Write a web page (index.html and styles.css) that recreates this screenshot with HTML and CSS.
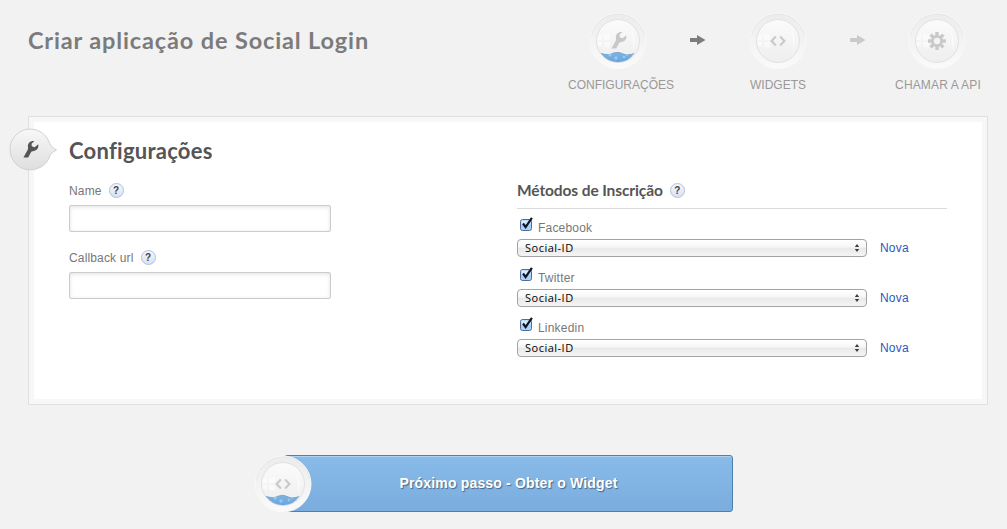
FILE: index.html
```html
<!DOCTYPE html>
<html lang="pt">
<head>
<meta charset="utf-8">
<title>Criar aplicação de Social Login</title>
<link rel="stylesheet" href="styles.css">
</head>
<body>
<svg class="defs" width="0" height="0" aria-hidden="true">
  <defs>
    <linearGradient id="ring" x1="0" y1="0" x2="0" y2="1"><stop offset="0" stop-color="#ececec"/><stop offset="1" stop-color="#fafafa"/></linearGradient>
    <linearGradient id="glass" x1="0" y1="0" x2="0" y2="1"><stop offset="0" stop-color="#fbfbfb"/><stop offset="1" stop-color="#eeeeee"/></linearGradient>
    <linearGradient id="water" x1="0" y1="0" x2="0" y2="1"><stop offset="0" stop-color="#7db5df"/><stop offset="1" stop-color="#68a4e2"/></linearGradient>
    <linearGradient id="pin" x1="0" y1="0" x2="0" y2="1"><stop offset="0" stop-color="#f8f8f8"/><stop offset="1" stop-color="#dedede"/></linearGradient>
    <symbol id="orb" viewBox="0 0 58 58">
      <circle cx="29" cy="29" r="28" fill="url(#ring)" stroke="#f8f8f8"/>
      <path d="M2.500 24a27 27 0 0 1 53 0" fill="none" stroke="#e3e3e3" opacity=".6"/>
      <circle cx="29" cy="29" r="21.500" fill="url(#glass)" stroke="#e2e2e2"/>
      <path d="M9 24l4-1v5H8zM15 23l6-1v6h-6zM8 30h5v5l-4-1zM15 30h6v6l-6-1z" fill="#fff" opacity=".5"/>
      <path d="M42 18q6 10 2 20q1-11-2-20z" fill="#fff" opacity=".7"/>
    </symbol>
    <symbol id="waves" viewBox="0 0 58 58">
      <path d="M12 41.500q4 1 7 1.200q3-.2 5-1.500q5-1.800 9 .2q3 1.800 6 1.400q3 0 6-1.300Q40 50 29 50.200Q18 50 12 41.500z" fill="url(#water)"/>
      <path d="M12 41.500q4 1 7 1.200q3-.2 5-1.500q5-1.800 9 .2q3 1.800 6 1.400q3 0 6-1.300" fill="none" stroke="#6ba0ca" stroke-width=".8"/>
      <g fill="#b5dbf5" opacity=".6"><circle cx="21" cy="43" r="1.500"/><circle cx="27" cy="46" r="1.700"/><circle cx="35" cy="45" r="1.300"/><circle cx="38" cy="43" r="1"/></g>
    </symbol>
    <symbol id="wrench" viewBox="0 0 18 20">
      <path d="M12.600 1C8.300.5 5 3.300 5.800 7.600Q6.300 9.700 5.100 11L1 18.600H6L9.300 12.500Q10.500 11.600 12.300 11.500C15.500 10.900 17.300 8.200 16.700 4.500L12.900 7.700L9.800 6.600L9.600 4z"/>
    </symbol>
    <symbol id="code" viewBox="0 0 18 12">
      <path d="M6.700 1.200L2 6L6.700 10.800M11.300 1.200L16 6L11.300 10.800" fill="none" stroke="currentColor" stroke-width="2.300"/>
    </symbol>
    <symbol id="gear" viewBox="-10 -10 20 20">
      <g fill="currentColor">
        <rect x="-1.700" y="-9" width="3.400" height="18"/>
        <rect x="-9" y="-1.700" width="18" height="3.400"/>
        <rect x="-1.700" y="-9" width="3.400" height="18" transform="rotate(45)"/>
        <rect x="-1.700" y="-9" width="3.400" height="18" transform="rotate(-45)"/>
        <circle r="6"/>
      </g>
      <circle r="3.200" fill="#f4f4f4"/>
    </symbol>
    <symbol id="arrow" viewBox="0 0 16 10"><path d="M0 3h7V0l8.500 5L7 10V7H0z" fill="currentColor"/></symbol>
    <symbol id="tick" viewBox="0 0 15 16">
      <rect x="1.500" y="3.500" width="11" height="11" rx="2" fill="#a9d2f4" stroke="#53699b"/>
      <path d="M2.500 4.500h9v4h-9z" fill="#d8ebfa"/>
      <path d="M4 7.500L6.600 11L12.900 1.800" fill="none" stroke="#10162c" stroke-width="2.200"/>
    </symbol>
    <symbol id="updown" viewBox="0 0 6 8"><path d="M.8 3L3 0l2.200 3zM.8 5h4.400L3 8z" fill="#3c3c3c"/></symbol>
  </defs>
</svg>

<header class="header">
  <h1 class="title">Criar aplicação de Social Login</h1>
  <nav class="steps">
    <div class="step">
      <svg class="orb" viewBox="0 0 58 58"><use href="#orb"/><use href="#waves"/><use href="#wrench" x="21.500" y="19" width="17" height="19" fill="#c8c8c8"/></svg>
      <span class="step-label step-label-first">CONFIGURAÇÕES</span>
    </div>
    <svg class="arrow arrow-active"><use href="#arrow"/></svg>
    <div class="step">
      <svg class="orb" viewBox="0 0 58 58"><use href="#orb"/><use href="#code" x="20" y="23.500" width="18" height="11"/></svg>
      <span class="step-label">WIDGETS</span>
    </div>
    <svg class="arrow"><use href="#arrow"/></svg>
    <div class="step">
      <svg class="orb orb-last" viewBox="0 0 58 58"><use href="#orb"/><use href="#gear" x="19" y="19" width="20" height="20"/></svg>
      <span class="step-label step-label-last">CHAMAR A API</span>
    </div>
  </nav>
</header>

<main class="card">
  <svg class="badge" viewBox="0 0 52 46">
    <path d="M22 2A20.500 20.500 0 1 0 42.200 28Q44.500 24.500 48.500 23Q43.500 20.500 42 17A20.500 20.500 0 0 0 22 2z" fill="url(#pin)" stroke="#d2d2d2"/>
    <use href="#wrench" x="14.500" y="13" width="17" height="19" fill="#555"/>
  </svg>
  <div class="panel">
    <section class="fields">
      <h2 class="heading">Configurações</h2>
      <div class="label"><span>Name</span><span class="help">?</span></div>
      <input class="input" type="text" aria-label="Name">
      <div class="label"><span>Callback url</span><span class="help">?</span></div>
      <input class="input" type="text" aria-label="Callback url">
    </section>
    <section class="methods">
      <div class="methods-head"><h3 class="subheading">Métodos de Inscrição</h3><span class="help">?</span></div>
      <div class="method">
        <div class="check"><svg class="tick"><use href="#tick"/></svg><span>Facebook</span></div>
        <div class="choice"><div class="select"><span>Social-ID</span><svg class="updown"><use href="#updown"/></svg></div><a class="link">Nova</a></div>
      </div>
      <div class="method">
        <div class="check"><svg class="tick"><use href="#tick"/></svg><span>Twitter</span></div>
        <div class="choice"><div class="select"><span>Social-ID</span><svg class="updown"><use href="#updown"/></svg></div><a class="link">Nova</a></div>
      </div>
      <div class="method">
        <div class="check"><svg class="tick"><use href="#tick"/></svg><span>Linkedin</span></div>
        <div class="choice"><div class="select"><span>Social-ID</span><svg class="updown"><use href="#updown"/></svg></div><a class="link">Nova</a></div>
      </div>
    </section>
  </div>
</main>

<div class="next">
  <svg class="orb next-orb" viewBox="0 0 58 58"><use href="#orb"/><use href="#waves"/><use href="#code" x="20" y="23.500" width="18" height="11"/></svg>
  <span class="next-text">Próximo passo - Obter o Widget</span>
</div>
</body>
</html>
```
FILE: styles.css
```css
* { box-sizing: border-box; }
html { height: 100%; overflow: hidden; }
body {
  margin: 0;
  background: #f2f2f2;
  color: #777;
  font: 12px/16px "Liberation Sans", Arial, sans-serif;
}
.defs { position: absolute; }
h1, h2, h3 { margin: 0; font-family: Lato, "Open Sans", sans-serif; font-weight: 700; white-space: nowrap; }

.header { display: flex; justify-content: space-between; height: 116px; padding: 12px 14px 0 28px; }
.title { padding-top: 12px; font-size: 23.5px; line-height: 32px; letter-spacing: .86px; color: #7b7b7b; }
.steps { display: flex; }
.step { display: flex; flex-direction: column; align-items: center; width: 110px; color: #999; }
.orb { display: block; width: 58px; height: 58px; color: #c9c9c9; }
.orb-last { margin-right: 2px; }
.step-label { margin-top: 7px; white-space: nowrap; }
.step-label-first { padding-left: 6px; }
.step-label-last { letter-spacing: .15px; }
.arrow { width: 16px; height: 10px; margin: 23px 17px 0; color: #cacaca; }
.arrow-active { color: #7c7c7c; }

.card { position: relative; width: 960px; height: 289px; margin-left: 28px; padding: 5px; background: #f7f7f7; border: 1px solid #e0e0e0; }
.badge { position: absolute; left: -21px; top: 10px; width: 52px; height: 46px; }
.panel { display: flex; gap: 186px; height: 277px; padding: 14px 35px 0 35px; background: #fff; }
.fields { width: 262px; }
.heading { font-size: 22px; line-height: 30px; letter-spacing: .25px; color: #555; }
.label { display: flex; align-items: center; gap: 7px; height: 15px; margin-top: 17px; letter-spacing: .15px; }
.help {
  width: 15px; height: 15px; border: 1px solid #b4bfd5; border-radius: 50%;
  background: linear-gradient(#f4f7fc, #d9e1f2); color: #444; letter-spacing: 0;
  font: bold 10px/13px "Liberation Sans", Arial, sans-serif; text-align: center;
}
.input {
  display: block; width: 262px; height: 27px; margin-top: 7px; border: 1px solid #ccc; border-radius: 2px;
  background: #fff; box-shadow: inset 0 1px 4px rgba(0, 0, 0, .12);
}
.input + .label { margin-top: 18px; }

.methods { width: 430px; padding-top: 44px; }
.methods-head { display: flex; align-items: center; gap: 7px; height: 29px; padding-bottom: 8px; margin-bottom: 7px; border-bottom: 1px solid #dcdcdc; }
.subheading { font-size: 15.5px; line-height: 20px; letter-spacing: -.1px; color: #555; }
.method { height: 50px; }
.check { display: flex; height: 23px; padding-left: 2px; gap: 4px; letter-spacing: .2px; }
.check span { padding-top: 4px; }
.tick { width: 15px; height: 16px; }
.choice { display: flex; gap: 13px; }
.select {
  display: flex; align-items: center; justify-content: space-between; width: 350px; height: 18px; padding: 0 6px 0 7px;
  border: 1px solid #a3a3a3; border-radius: 4px; background: linear-gradient(#fff 0, #f6f6f6 45%, #e9e9e9 50%, #f5f5f5 100%);
  color: #000; font: 11px/16px "Open Sans", sans-serif; letter-spacing: .5px;
}
.updown { width: 6px; height: 8px; }
.link { color: #2e57bd; line-height: 18px; letter-spacing: .2px; }

.next {
  position: relative; display: flex; align-items: center; justify-content: center; width: 449px; height: 57px; margin: 50px 0 0 284px;
  border: 1px solid #4d80ad; border-radius: 3px; background: linear-gradient(#89bbe9, #7aadde);
  box-shadow: inset 0 1px #add2f3;
}
.next-orb { position: absolute; left: -31px; top: -1px; }
.next-text { padding-bottom: 2px; color: #fff; font-size: 14px; font-weight: 700; letter-spacing: .17px; text-shadow: 1px 1px 1px #44678a; white-space: nowrap; }
```
